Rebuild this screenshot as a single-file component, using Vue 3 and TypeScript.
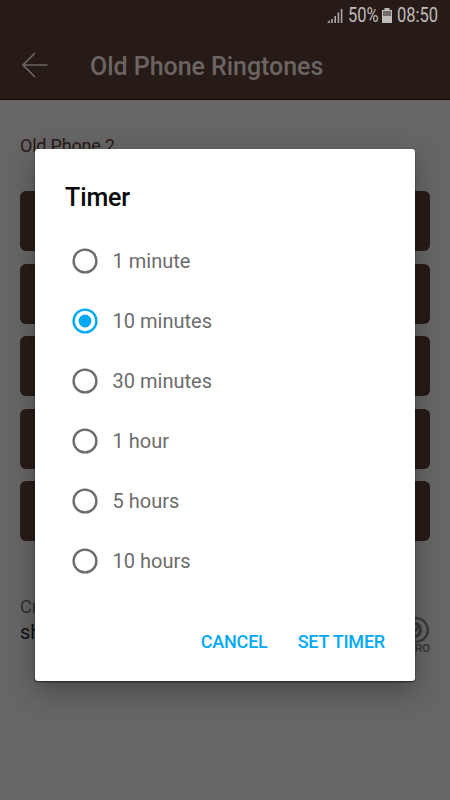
<script setup lang="ts">
import { ref } from 'vue'

const options: string[] = ['1 minute', '10 minutes', '30 minutes', '1 hour', '5 hours', '10 hours']
const selected = ref<string>('10 minutes')
const tones: number[] = [1, 2, 3, 4, 5]
</script>

<template>
  <div class="screen">
    <header class="top">
      <div class="status">
        <svg class="signal" width="16" height="15" viewBox="0 0 16 15">
          <path d="M0 15L3 12V15ZM4.2 11H5.8V15H4.2ZM7.4 8H9V15H7.4ZM10.6 4.5H12.2V15H10.6ZM13.8 1H15.4V15H13.8Z" fill="#aaa6a5" />
        </svg>
        <span class="percent"><span class="narrow">50%</span></span>
        <svg class="battery" width="10" height="15" viewBox="0 0 10 15">
          <path d="M2.5 0H7.5V2H10V15H0V2H2.5Z" fill="#bebbba" />
          <path d="M1 3H9V8H1Z" fill="#706b69" />
        </svg>
        <span class="clock"><span class="narrow">08:50</span></span>
      </div>
      <div class="bar">
        <svg class="back" width="26" height="26" viewBox="0 0 26 26">
          <path d="M13 1L1 13L13 25M1 13H25.5" fill="none" stroke="#6b6462" stroke-width="1.7" />
        </svg>
        <h1>Old Phone Ringtones</h1>
      </div>
    </header>

    <main class="content">
      <p class="name">Old Phone 2</p>
      <div class="tones">
        <button v-for="tone in tones" :key="tone" class="tone"></button>
      </div>
      <div class="license">
        <div>
          <p class="credit">Cr</p>
          <p class="author">sh</p>
        </div>
        <div class="zero">
          <svg width="26" height="26" viewBox="0 0 26 26">
            <circle cx="13" cy="13" r="11.8" fill="none" stroke="#35363a" stroke-width="2.2" />
            <ellipse cx="13" cy="13" rx="4.3" ry="6.2" fill="none" stroke="#35363a" stroke-width="3" />
            <path d="M10 18L16 8" stroke="#35363a" stroke-width="2.2" />
          </svg>
          <span>ZERO</span>
        </div>
      </div>
    </main>

    <section class="dialog" role="dialog">
      <h2>Timer</h2>
      <div class="options">
        <label v-for="option in options" :key="option" class="option" @click="selected = option">
          <svg class="radio" :class="{ on: option === selected }" width="26" height="26" viewBox="0 0 26 26">
            <circle cx="13" cy="13" r="11.4" fill="none" stroke="currentColor" stroke-width="2.4" />
            <circle v-if="option === selected" cx="13" cy="13" r="6.4" fill="currentColor" />
          </svg>
          <span>{{ option }}</span>
        </label>
      </div>
      <div class="actions">
        <button>CANCEL</button>
        <button>SET TIMER</button>
      </div>
    </section>
  </div>
</template>

<style>
body {
  margin: 0;
}
</style>

<style scoped>
.screen {
  position: relative;
  width: 450px;
  height: 800px;
  overflow: hidden;
  background: #666;
  font-family: Roboto, "Liberation Sans", sans-serif;
}
h1, h2, p {
  margin: 0;
}
button {
  border: 0;
  padding: 0;
  font-family: inherit;
}
.top {
  box-sizing: border-box;
  height: 100px;
  background: #271b17;
  border-bottom: 1px solid #160503;
}
.status {
  display: flex;
  height: 30px;
  align-items: center;
  justify-content: flex-end;
  padding-right: 11px;
  color: #bebbba;
  font-size: 20px;
  line-height: 30px;
}
.signal {
  margin-right: 5px;
}
.percent {
  width: 30px;
}
.clock {
  width: 42px;
}
.battery {
  margin: 0 5px 0 4px;
}
.narrow {
  display: inline-block;
  transform: scaleX(0.825);
  transform-origin: left center;
}
.bar {
  display: flex;
  height: 70px;
  align-items: center;
  padding-left: 22px;
}
.back {
  margin-right: 42px;
}
h1 {
  padding-top: 4px;
  color: #6b6462;
  font-size: 25px;
  font-weight: 500;
  line-height: 30px;
  letter-spacing: -0.04px;
}
.content {
  padding: 34px 20px 0;
}
.name {
  height: 24px;
  color: #2a1916;
  font-size: 18px;
  line-height: 24px;
  letter-spacing: -0.2px;
}
.tones {
  display: flex;
  flex-direction: column;
  gap: 12.5px;
  margin-top: 33px;
}
.tone {
  height: 60px;
  border-radius: 6px;
  background: #271b17;
}
.license {
  display: flex;
  justify-content: space-between;
  margin-top: 53px;
}
.credit {
  height: 25px;
  color: #303030;
  font-size: 18px;
  line-height: 25px;
}
.author {
  height: 25px;
  color: #101010;
  font-size: 20px;
  line-height: 27px;
}
.zero {
  display: flex;
  flex-direction: column;
  align-items: flex-end;
  padding-top: 23px;
}
.zero svg {
  margin-right: 1px;
}
.zero span {
  color: #35363a;
  font: bold 10px/12px "Liberation Sans", sans-serif;
}
.dialog {
  position: absolute;
  top: 149px;
  left: 35px;
  box-sizing: border-box;
  width: 380px;
  height: 532px;
  padding: 34px 30px 0;
  border-radius: 3px;
  background: #fff;
  box-shadow: 0 1px 2px rgba(0, 0, 0, 0.6), 0 10px 28px rgba(0, 0, 0, 0.3);
}
h2 {
  height: 30px;
  color: #0a0a0a;
  font-size: 25px;
  font-weight: 500;
  line-height: 30px;
  letter-spacing: -0.1px;
}
.options {
  margin-top: 18px;
}
.option {
  display: flex;
  height: 60px;
  align-items: center;
  gap: 15px;
  padding-left: 7px;
  color: #6c6c6c;
  font-size: 20px;
}
.option span {
  margin-left: -0.4px;
}
.actions {
  display: flex;
  justify-content: flex-end;
  gap: 30px;
  margin-top: 40px;
}
.radio.on {
  color: #03a9f4;
}
.actions button {
  background: none;
  color: #03a9f4;
  font-size: 18px;
  font-weight: 500;
  line-height: 22px;
  letter-spacing: -0.2px;
}
</style>
